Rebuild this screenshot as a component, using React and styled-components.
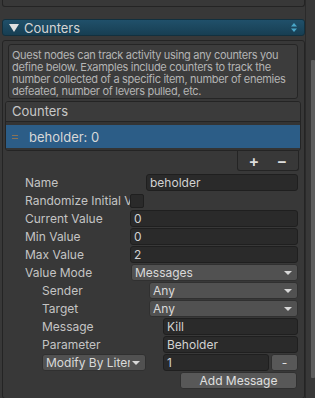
import styled, { createGlobalStyle } from 'styled-components'

const Global = createGlobalStyle`
html, body {
    margin: 0;
    padding: 0;
    background: #383838;
    overflow: hidden;
}
body {
    font-family: Inter, "Noto Sans", sans-serif;
    font-size: 12px;
    color: #c4c4c4;
}
`

const Page = styled.div`
display: flex;
width: 315px;
height: 398px;
`

const Main = styled.div`
width: 304px;
padding-left: 2px;
`

const TopStub = styled.div`
height: 6px;
border: 1px solid #242424;
border-top: none;
border-radius: 0 0 3px 3px;
`

const Foldout = styled.div`
margin-top: 12px;
width: 301px;
height: 15px;
display: flex;
align-items: center;
border: 1px solid #12303e;
border-radius: 3px;
background: linear-gradient(#20506a, #173e52);
color: #d4d4d4;
font-size: 13px;

.foldout_arrow {
    margin: 0 5px 0 6px;
    width: 0;
    height: 0;
    border-left: 5px solid transparent;
    border-right: 5px solid transparent;
    border-top: 8px solid #e0e0e0;
}
.foldout_title {
    flex: 1;
}
.foldout_sort {
    margin-right: 6px;
    display: flex;
}
`

const Panel = styled.div`
margin-top: 4px;
height: 354px;
border: 1px solid #242424;
border-radius: 3px;
padding: 3px 0 0 5px;
`

const HelpBox = styled.div`
width: 282px;
height: 48px;
border: 1px solid #252525;
border-radius: 3px;
background: #3c3c3c;
padding: 4px 3px 1px 3px;
font-size: 11px;
line-height: 12px;
letter-spacing: -0.3px;
color: #b4b4b4;
`

const List = styled.div`
margin: 2px 0 0 -3px;
width: 294px;
border: 1px solid #242424;
border-radius: 3px;
overflow: hidden;

.list_header {
    height: 19px;
    line-height: 19px;
    padding-left: 6px;
    background: #3b3b3b;
    border-bottom: 1px solid #242424;
    font-size: 13px;
    color: #c8c8c8;
}
.list_body {
    background: #343434;
    padding: 3px 0 2px;
}
`

const ListRow = styled.div`
height: 23px;
display: flex;
align-items: center;
background: ${p => p.selected ? '#2c5d87' : 'transparent'};
color: #d8d8d8;
font-size: 13px;

.row_handle {
    width: 6px;
    margin: 0 11px 0 6px;
    display: flex;
    flex-direction: column;
    gap: 2px;
    span {
        height: 1px;
        background: #8a7255;
    }
}
`

const ListFooter = styled.div`
margin-left: 229px;
width: 56px;
height: 19px;
border: 1px solid #242424;
border-top: none;
border-radius: 0 0 3px 3px;
display: flex;
align-items: center;
justify-content: space-around;
padding: 0 2px;
color: #dcdcdc;
font-size: 16px;
font-weight: 600;
`

const Fields = styled.div`
margin-top: 3px;
display: flex;
flex-direction: column;
`

const Row = styled.div`
height: 18px;
display: flex;
align-items: flex-start;
padding-left: ${p => p.indent}px;
padding-right: 6px;
`

const Label = styled.div`
width: ${p => p.width}px;
flex-shrink: 0;
height: 17px;
line-height: 17px;
white-space: nowrap;
overflow: hidden;
color: #c4c4c4;
`

const TextField = styled.div`
flex: ${p => p.width ? 'none' : 1};
width: ${p => p.width ? p.width + 'px' : 'auto'};
margin-left: ${p => p.offset || 0}px;
height: 15px;
line-height: 15px;
border: 1px solid #1f1f1f;
border-radius: 3px;
background: #2a2a2a;
color: #d2d2d2;
padding-left: 3px;
box-sizing: content-box;
`

const Dropdown = styled.div`
flex: ${p => p.width ? 'none' : 1};
width: ${p => p.width ? p.width + 'px' : 'auto'};
box-sizing: border-box;
height: 17px;
border: 1px solid #303030;
border-radius: 3px;
background: #515151;
color: #dadada;
display: flex;
align-items: center;
padding: 0 5px 0 3px;
font-size: 12px;

.dropdown_value {
    flex: 1;
    min-width: 0;
    white-space: nowrap;
    overflow: hidden;
}
.dropdown_arrow {
    flex-shrink: 0;
    width: 0;
    height: 0;
    border-left: 4px solid transparent;
    border-right: 4px solid transparent;
    border-top: 4px solid #d8d8d8;
    margin-left: 2px;
}
`

const Checkbox = styled.div`
width: 12px;
height: 12px;
margin-top: 2px;
border: 1px solid #1f1f1f;
border-radius: 2px;
background: #2a2a2a;
`

const Button = styled.div`
width: ${p => p.width}px;
margin-left: ${p => p.offset || 0}px;
box-sizing: border-box;
height: 17px;
line-height: 15px;
border: 1px solid #303030;
border-radius: 3px;
background: #585858;
color: #e0e0e0;
text-align: center;
`

const Scrollbar = styled.div`
width: 9px;
display: flex;
justify-content: flex-end;
border-left: 1px solid #2a2a2a;
background: #383838;

.scroll_thumb {
    margin-top: 60px;
    width: 4px;
    height: 318px;
    background: #5d5d5d;
    border-radius: 1px;
}
`

const fields = [
    { label: 'Current Value', value: '0' },
    { label: 'Min Value', value: '0' },
    { label: 'Max Value', value: '2' },
]

export default function App() {
    return (
        <Page>
            <Global />
            <Main>
                <TopStub />
                <Foldout>
                    <div className="foldout_arrow" />
                    <span className="foldout_title">Counters</span>
                    <div className="foldout_sort">
                        <svg width="8" height="11" viewBox="0 0 8 11">
                            <path d="M4 1 L7 4.5 H1 Z" fill="#4aa7c9" />
                            <path d="M4 10 L7 6.5 H1 Z" fill="#4aa7c9" />
                        </svg>
                    </div>
                </Foldout>
                <Panel>
                    <HelpBox>
                        Quest nodes can track activity using any counters you define below. Examples include counters to track the number collected of a specific item, number of enemies defeated, number of levers pulled, etc.
                    </HelpBox>
                    <List>
                        <div className="list_header">Counters</div>
                        <div className="list_body">
                            <ListRow selected>
                                <div className="row_handle">
                                    <span />
                                    <span />
                                </div>
                                beholder: 0
                            </ListRow>
                        </div>
                    </List>
                    <ListFooter>
                        <span>+</span>
                        <span>−</span>
                    </ListFooter>
                    <Fields>
                        <Row indent={17}>
                            <Label width={121}>Name</Label>
                            <TextField>beholder</TextField>
                        </Row>
                        <Row indent={17}>
                            <Label width={105}>Randomize Initial Value</Label>
                            <Checkbox />
                        </Row>
                        {fields.map(f => (
                            <Row indent={17} key={f.label}>
                                <Label width={105}>{f.label}</Label>
                                <TextField>{f.value}</TextField>
                            </Row>
                        ))}
                        <Row indent={17}>
                            <Label width={106}>Value Mode</Label>
                            <Dropdown>
                                <span className="dropdown_value">Messages</span>
                                <div className="dropdown_arrow" />
                            </Dropdown>
                        </Row>
                        <Row indent={34}>
                            <Label width={107}>Sender</Label>
                            <Dropdown>
                                <span className="dropdown_value">Any</span>
                                <div className="dropdown_arrow" />
                            </Dropdown>
                        </Row>
                        <Row indent={34}>
                            <Label width={107}>Target</Label>
                            <Dropdown>
                                <span className="dropdown_value">Any</span>
                                <div className="dropdown_arrow" />
                            </Dropdown>
                        </Row>
                        <Row indent={34}>
                            <Label width={121}>Message</Label>
                            <TextField>Kill</TextField>
                        </Row>
                        <Row indent={34}>
                            <Label width={121}>Parameter</Label>
                            <TextField>Beholder</TextField>
                        </Row>
                        <Row indent={34}>
                            <Dropdown width={104}>
                                <span className="dropdown_value">Modify By Literal Value</span>
                                <div className="dropdown_arrow" />
                            </Dropdown>
                            <TextField width={101} offset={17}>1</TextField>
                            <Button width={27} offset={2}>-</Button>
                        </Row>
                        <Row indent={34}>
                            <Button width={117} offset={138}>Add Message</Button>
                        </Row>
                    </Fields>
                </Panel>
            </Main>
            <Scrollbar>
                <div className="scroll_thumb" />
            </Scrollbar>
        </Page>
    )
}
